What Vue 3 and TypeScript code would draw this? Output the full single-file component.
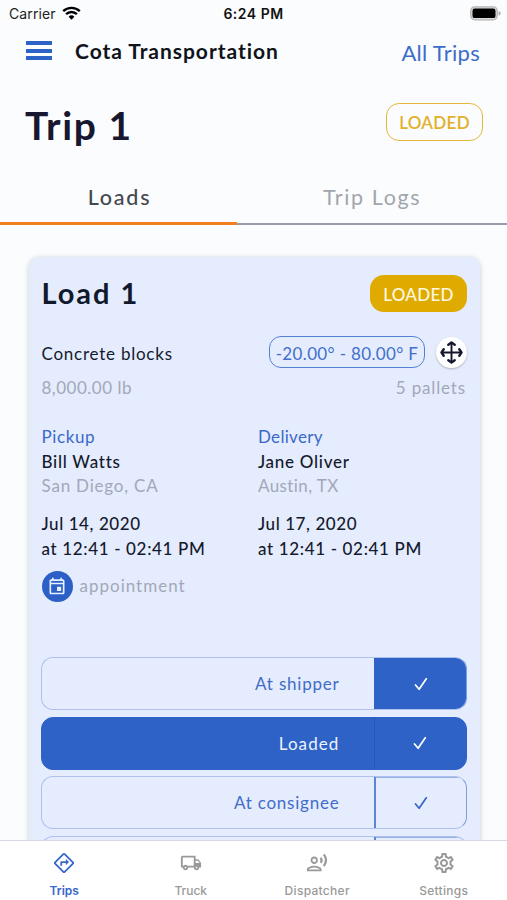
<script setup lang="ts">
interface Stop {
  kind: string
  name: string
  place: string
  date: string
  time: string
  appointment?: boolean
}
interface Step {
  label: string
  state: 'past' | 'current' | 'next'
}
interface NavItem {
  label: string
  icon: 'trips' | 'truck' | 'dispatcher' | 'settings'
}

const stops: Stop[] = [
  { kind: 'Pickup', name: 'Bill Watts', place: 'San Diego, CA', date: 'Jul 14, 2020', time: 'at 12:41 - 02:41 PM', appointment: true },
  { kind: 'Delivery', name: 'Jane Oliver', place: 'Austin, TX', date: 'Jul 17, 2020', time: 'at 12:41 - 02:41 PM' },
]
const steps: Step[] = [
  { label: 'At shipper', state: 'past' },
  { label: 'Loaded', state: 'current' },
  { label: 'At consignee', state: 'next' },
  { label: '', state: 'next' },
]
const nav: NavItem[] = [
  { label: 'Trips', icon: 'trips' },
  { label: 'Truck', icon: 'truck' },
  { label: 'Dispatcher', icon: 'dispatcher' },
  { label: 'Settings', icon: 'settings' },
]
</script>

<template>
  <div class="screen">
    <div class="status">
      <div class="carrier">
        <span>Carrier</span>
        <svg width="19" height="14" viewBox="0 0 19 14">
          <path d="M1.2 5.2a12 12 0 0 1 16.6 0M4.1 8.2a7.8 7.8 0 0 1 10.8 0" fill="none" stroke="#000" stroke-width="2.4" />
          <path d="M6.6 10.7a4.2 4.2 0 0 1 5.8 0L9.500 13.700z" fill="#000" />
        </svg>
      </div>
      <span class="clock">6:24 PM</span>
      <svg class="battery" width="31" height="15" viewBox="0 0 31 15">
        <rect x=".8" y=".8" width="26.400" height="13" rx="4" fill="#ddd" stroke="#b4b4b4" stroke-width="1.300" />
        <rect x="2.500" y="2.500" width="23" height="9.600" rx="2.200" fill="#000" />
        <path d="M28.600 5v4.600c1.200-.4 2-1.300 2-2.300s-.8-1.900-2-2.300z" fill="#aaa" />
      </svg>
    </div>

    <header class="header">
      <div class="menu"><i></i><i></i><i></i></div>
      <span class="company">Cota Transportation</span>
      <a class="all">All Trips</a>
    </header>

    <div class="trip">
      <h1>Trip 1</h1>
      <span class="badge outline">LOADED</span>
    </div>

    <nav class="tabs">
      <span class="tab active">Loads</span>
      <span class="tab logs">Trip Logs</span>
    </nav>

    <main class="content">
      <section class="card">
        <div class="card-head">
          <h2>Load 1</h2>
          <span class="badge solid">LOADED</span>
        </div>
        <div class="cargo">
          <span class="goods">Concrete blocks</span>
          <span class="temp">-20.00° - 80.00° F</span>
          <span class="move">
            <svg width="23" height="23" viewBox="0 0 23 23" fill="none" stroke="#15152f" stroke-width="2.400" stroke-linecap="round" stroke-linejoin="round">
              <path d="M11.500 2v19M2 11.500h19" stroke-width="1.900" />
              <path d="M8.300 3.700 11.500 1.500 14.700 3.700M8.300 19.300l3.200 2.200 3.200-2.200M3.700 8.300 1.500 11.500 3.700 14.700M19.300 8.300l2.200 3.200-2.200 3.200" />
            </svg>
          </span>
        </div>
        <div class="amounts">
          <span class="weight">8,000.00 lb</span>
          <span class="pallets">5 pallets</span>
        </div>

        <div class="stops">
          <div v-for="stop in stops" :key="stop.kind" class="stop" :class="stop.kind.toLowerCase()">
            <div class="kind">{{ stop.kind }}</div>
            <div class="name">{{ stop.name }}</div>
            <div class="place">{{ stop.place }}</div>
            <div class="date">{{ stop.date }}</div>
            <div class="time">{{ stop.time }}</div>
            <div v-if="stop.appointment" class="appt">
              <span class="appt-icon">
                <svg width="20" height="20" viewBox="0 0 24 24" fill="#e8efff">
                  <path d="M19 4h-1V2h-2v2H8V2H6v2H5c-1.110 0-2 .9-2 2v14c0 1.100.89 2 2 2h14c1.100 0 2-.9 2-2V6c0-1.100-.9-2-2-2zm0 16H5V10h14v10zm0-12H5V6h14v2zm-2 5h-5v5h5v-5z" />
                </svg>
              </span>
              <span>appointment</span>
            </div>
          </div>
        </div>

        <div class="steps">
          <div v-for="(step, i) in steps" :key="i" class="step" :class="step.state">
            <span class="step-label">{{ step.label }}</span>
            <span class="step-check">
              <svg width="14" height="14" viewBox="0 0 14 14" fill="none" stroke="currentColor" stroke-width="1.700" stroke-linecap="round" stroke-linejoin="round">
                <path d="M1.500 8 5.100 12.300 12.300 1.800" />
              </svg>
            </span>
          </div>
        </div>
      </section>
    </main>

    <footer class="bottom">
      <div v-for="item in nav" :key="item.label" class="nav-item" :class="item.icon">
        <svg v-if="item.icon === 'trips'" width="22" height="22" viewBox="0 0 24 24" fill="currentColor">
          <path d="m22.430 10.590-9.010-9.010c-.75-.75-2.070-.76-2.830 0l-9 9c-.78.78-.78 2.040 0 2.820l9 9c.39.39.9.58 1.410.58.510 0 1.020-.19 1.410-.58l8.990-8.990c.79-.76.8-2.020.03-2.820zm-10.420 10.400-9-9 9-9 9 9-9 9zM8 11v4h2v-3h4v2.500l3.500-3.500L14 7.500V10H9c-.55 0-1 .45-1 1z" />
        </svg>
        <svg v-else-if="item.icon === 'truck'" width="22" height="22" viewBox="0 0 24 24" fill="currentColor">
          <path d="M20 8h-3V4H3c-1.100 0-2 .9-2 2v11h2c0 1.660 1.340 3 3 3s3-1.340 3-3h6c0 1.660 1.340 3 3 3s3-1.340 3-3h2v-5l-3-4zm-.5 1.500 1.960 2.500H17V9.500h2.500zM6 18c-.55 0-1-.45-1-1s.45-1 1-1 1 .45 1 1-.45 1-1 1zm2.220-3c-.55-.61-1.330-1-2.220-1s-1.670.39-2.220 1H3V6h12v9H8.220zM18 18c-.55 0-1-.45-1-1s.45-1 1-1 1 .45 1 1-.45 1-1 1z" />
        </svg>
        <svg v-else-if="item.icon === 'dispatcher'" width="22" height="22" viewBox="0 0 24 24" fill="currentColor">
          <path d="M9 13c2.210 0 4-1.790 4-4s-1.790-4-4-4-4 1.790-4 4 1.790 4 4 4zm0-6c1.100 0 2 .9 2 2s-.9 2-2 2-2-.9-2-2 .9-2 2-2zm0 8c-2.670 0-8 1.340-8 4v2h16v-2c0-2.660-5.330-4-8-4zm-6 4c.22-.72 3.310-2 6-2 2.700 0 5.800 1.290 6 2H3zM15.080 7.050c.84 1.180.84 2.710 0 3.890l1.680 1.690c2.020-2.020 2.020-5.070 0-7.270l-1.680 1.690zM20.070 2l-1.630 1.630c2.770 3.020 2.770 7.560 0 10.740L20.070 16c3.900-3.890 3.910-9.950 0-14z" />
        </svg>
        <svg v-else class="gear" width="24" height="24" viewBox="0 0 24 24" fill="currentColor">
          <path d="M19.430 12.980c.04-.32.070-.64.070-.98 0-.34-.03-.66-.07-.98l2.110-1.650c.19-.15.24-.42.12-.64l-2-3.460c-.09-.16-.26-.25-.44-.25-.06 0-.12.010-.17.030l-2.490 1c-.52-.4-1.080-.73-1.690-.98l-.38-2.650C14.460 2.180 14.250 2 14 2h-4c-.25 0-.46.18-.49.42l-.38 2.650c-.61.25-1.170.59-1.690.98l-2.490-1c-.06-.02-.12-.03-.18-.03-.17 0-.34.090-.43.250l-2 3.460c-.13.220-.07.490.12.640l2.110 1.650c-.04.320-.07.650-.07.980 0 .33.030.66.070.98l-2.110 1.650c-.19.150-.24.420-.12.640l2 3.460c.09.160.26.250.44.250.06 0 .12-.01.17-.03l2.490-1c.52.4 1.080.73 1.690.98l.38 2.650c.03.240.24.420.49.420h4c.25 0 .46-.18.49-.42l.38-2.650c.61-.25 1.170-.59 1.690-.98l2.490 1c.06.020.12.030.18.030.17 0 .34-.09.43-.25l2-3.460c.12-.22.070-.49-.12-.64l-2.110-1.650zm-1.980-1.710c.04.310.05.520.05.730 0 .21-.02.430-.05.730l-.14 1.130.89.7 1.080.84-.7 1.210-1.270-.51-1.040-.42-.9.680c-.43.320-.84.560-1.250.73l-1.060.43-.16 1.130-.2 1.350h-1.400l-.19-1.350-.16-1.130-1.060-.43c-.43-.18-.83-.41-1.230-.71l-.91-.7-1.060.43-1.270.51-.7-1.210 1.080-.84.89-.7-.14-1.130c-.03-.31-.05-.54-.05-.74s.02-.43.050-.73l.14-1.130-.89-.7-1.080-.84.7-1.210 1.270.51 1.040.42.9-.68c.43-.32.840-.56 1.250-.73l1.060-.43.16-1.130.2-1.350h1.390l.19 1.350.16 1.130 1.060.43c.43.180.83.410 1.230.71l.91.700 1.060-.43 1.270-.51.700 1.210-1.070.85-.89.700.14 1.130zM12 8c-2.210 0-4 1.790-4 4s1.790 4 4 4 4-1.790 4-4-1.790-4-4-4zm0 6c-1.100 0-2-.9-2-2s.9-2 2-2 2 .9 2 2-.9 2-2 2z" />
        </svg>
        <span>{{ item.label }}</span>
      </div>
    </footer>
  </div>
</template>

<style>
body {
  background: #fafcfe;
}
</style>

<style scoped>
.screen {
  display: flex;
  flex-direction: column;
  width: 507px;
  height: 900px;
  overflow: hidden;
  background: #fafcfe;
  color: #141a2c;
  font-family: Lato, sans-serif;
  font-size: 17px;
  white-space: nowrap;
}
.status {
  display: grid;
  grid-template-columns: 1fr auto 1fr;
  align-items: center;
  height: 28px;
  padding: 0 6px;
  box-sizing: border-box;
  font: 400 14px/28px Inter, sans-serif;
  color: #222;
}
.carrier {
  display: flex;
  align-items: center;
  gap: 6px;
  padding-left: 3px;
  letter-spacing: 0.1px;
}
.carrier svg {
  margin-top: -3px;
}
.clock {
  font-weight: 600;
  letter-spacing: 0.5px;
  color: #111;
}
.battery {
  justify-self: end;
  margin-top: -2px;
}
.header {
  display: flex;
  align-items: center;
  height: 46px;
  padding: 0 27px 0 26px;
}
.menu {
  display: flex;
  flex-direction: column;
  gap: 3.5px;
  width: 26px;
  margin-top: -1px;
}
.menu i {
  height: 4px;
  background: #2d62c6;
}
.company {
  margin: -2px 0 0 23px;
  font-size: 21px;
  font-weight: 700;
  letter-spacing: 0.96px;
  color: #10131a;
}
.all {
  margin: 3px 0 0 auto;
  font-size: 22px;
  letter-spacing: 0.3px;
  color: #3e6cc9;
}
.trip {
  display: flex;
  align-items: center;
  justify-content: space-between;
  height: 96px;
  padding: 0 24px 0 25px;
}
h1 {
  margin: 6px 0 0;
  font-size: 39px;
  line-height: 48px;
  font-weight: 700;
  letter-spacing: 1.6px;
  color: #17172f;
}
.badge {
  box-sizing: border-box;
  width: 97px;
  height: 38px;
  border-radius: 13px;
  text-align: center;
  font-size: 17px;
  line-height: 38px;
  letter-spacing: 0.3px;
}
.outline {
  border: 1.5px solid #e4b83a;
  color: #e2b02a;
  font-weight: 600;
}
.tabs {
  display: flex;
  height: 55px;
}
.tab {
  box-sizing: border-box;
  flex: 1;
  border-bottom: 2px solid #9a9cae;
  text-align: center;
  font-size: 21.5px;
  line-height: 55px;
  letter-spacing: 1.6px;
  color: #a2a5ac;
}
.tab.active {
  flex: 0 0 237px;
  padding-left: 2px;
  border-bottom: 3px solid #f07f1e;
  color: #44484f;
  font-weight: 500;
  letter-spacing: 1.8px;
}
.content {
  flex: 1;
  min-height: 0;
  overflow: hidden;
  padding: 32px 27px 0 29px;
}
.card {
  box-sizing: border-box;
  height: 700px;
  padding: 18px 13px 0 12.5px;
  border-radius: 10px;
  background: #e5ecfe;
  box-shadow: 0 1px 5px rgba(40, 60, 50, 0.25);
}
.card-head {
  display: flex;
  justify-content: space-between;
  align-items: center;
  height: 37px;
}
h2 {
  margin: -2px 0 0;
  font-size: 29px;
  font-weight: 700;
  letter-spacing: 1.95px;
  color: #111a2c;
}
.solid {
  height: 37px;
  border-radius: 14px;
  background: #dfab00;
  color: #fff8e2;
  font-weight: 500;
  line-height: 39px;
}
.cargo {
  display: flex;
  align-items: center;
  height: 32px;
  margin-top: 24px;
}
.goods {
  letter-spacing: 0.76px;
  margin-top: 3px;
}
.temp {
  box-sizing: border-box;
  width: 156px;
  height: 32px;
  margin-left: auto;
  border: 1.5px solid #5580d4;
  border-radius: 12px;
  text-align: center;
  line-height: 33px;
  letter-spacing: 0.35px;
  color: #416fcb;
}
.move {
  display: flex;
  align-items: center;
  justify-content: center;
  width: 31px;
  height: 31px;
  margin-left: 11px;
  border-radius: 50%;
  background: #fff;
  box-shadow: 0 1px 2px rgba(0, 0, 0, 0.25);
}
.amounts {
  display: flex;
  justify-content: space-between;
  margin-top: 8px;
  padding-right: 1px;
  line-height: 24px;
  color: #a2a8b8;
}
.weight {
  letter-spacing: 0.5px;
}
.pallets {
  letter-spacing: 0.85px;
}
.stops {
  display: grid;
  grid-template-columns: 216.5px 1fr;
  height: 232px;
  margin-top: 25px;
  line-height: 24.6px;
  letter-spacing: 0.72px;
}
.kind {
  color: #3a69c8;
  letter-spacing: 0.6px;
}
.delivery .kind {
  letter-spacing: 0.3px;
}
.name,
.date,
.time {
  font-weight: 500;
}
.place {
  color: #a2a8b8;
  letter-spacing: 0.8px;
}
.delivery .place {
  letter-spacing: 0.4px;
}
.date {
  margin-top: 13px;
  letter-spacing: 0.58px;
}
.time {
  margin-top: 0.7px;
  letter-spacing: 0.65px;
}
.appt {
  display: flex;
  align-items: center;
  gap: 7px;
  margin-top: 9.3px;
  letter-spacing: 1px;
  color: #a2a8b8;
}
.appt-icon {
  display: flex;
  align-items: center;
  justify-content: center;
  width: 31px;
  height: 31px;
  border-radius: 50%;
  background: #2d60c6;
}
.steps {
  display: flex;
  flex-direction: column;
  gap: 6.5px;
  margin-left: -1px;
}
.step {
  display: flex;
  box-sizing: border-box;
  flex: 0 0 53px;
  border: 1px solid #aec1ec;
  border-radius: 12px;
  overflow: hidden;
  color: #416dc7;
}
.step-label {
  flex: 1;
  padding-right: 34.5px;
  text-align: right;
  line-height: 52px;
  letter-spacing: 0.78px;
}
.step-check {
  display: flex;
  align-items: center;
  justify-content: center;
  box-sizing: border-box;
  width: 92px;
  padding-right: 1px;
  border-left: 2px solid #5c85d5;
}
.past .step-check {
  background: #2e62c6;
  border-left-color: #2e62c6;
  color: #fff;
}
.past {
  border-right-color: #7d9edf;
}
.current {
  background: #2e62c6;
  border-color: #2e62c6;
  color: #edf3ff;
}
.current .step-label {
  letter-spacing: 1.1px;
}
.current .step-check {
  border-left: 1.5px solid #2857b4;
  color: #fff;
}
.next {
  border-right-color: #7d9edf;
}
.next .step-check {
  color: #3566c5;
  box-shadow: inset 0 1px #96b0e4;
}
.bottom {
  display: flex;
  flex: 0 0 60px;
  box-sizing: border-box;
  border-top: 1px solid #d6dae2;
  background: #fff;
}
.nav-item {
  display: flex;
  flex: 1;
  flex-direction: column;
  align-items: center;
  padding-top: 11px;
  font: 500 12px/16px Inter, sans-serif;
  letter-spacing: 0.3px;
  color: #999;
}
.nav-item span {
  margin-top: 9px;
}
.nav-item .gear {
  margin: -1px 0;
}
.nav-item.trips {
  padding-left: 1px;
  color: #3868c9;
  font-weight: 600;
  letter-spacing: 0;
}
.nav-item.truck {
  letter-spacing: 0;
}
</style>
